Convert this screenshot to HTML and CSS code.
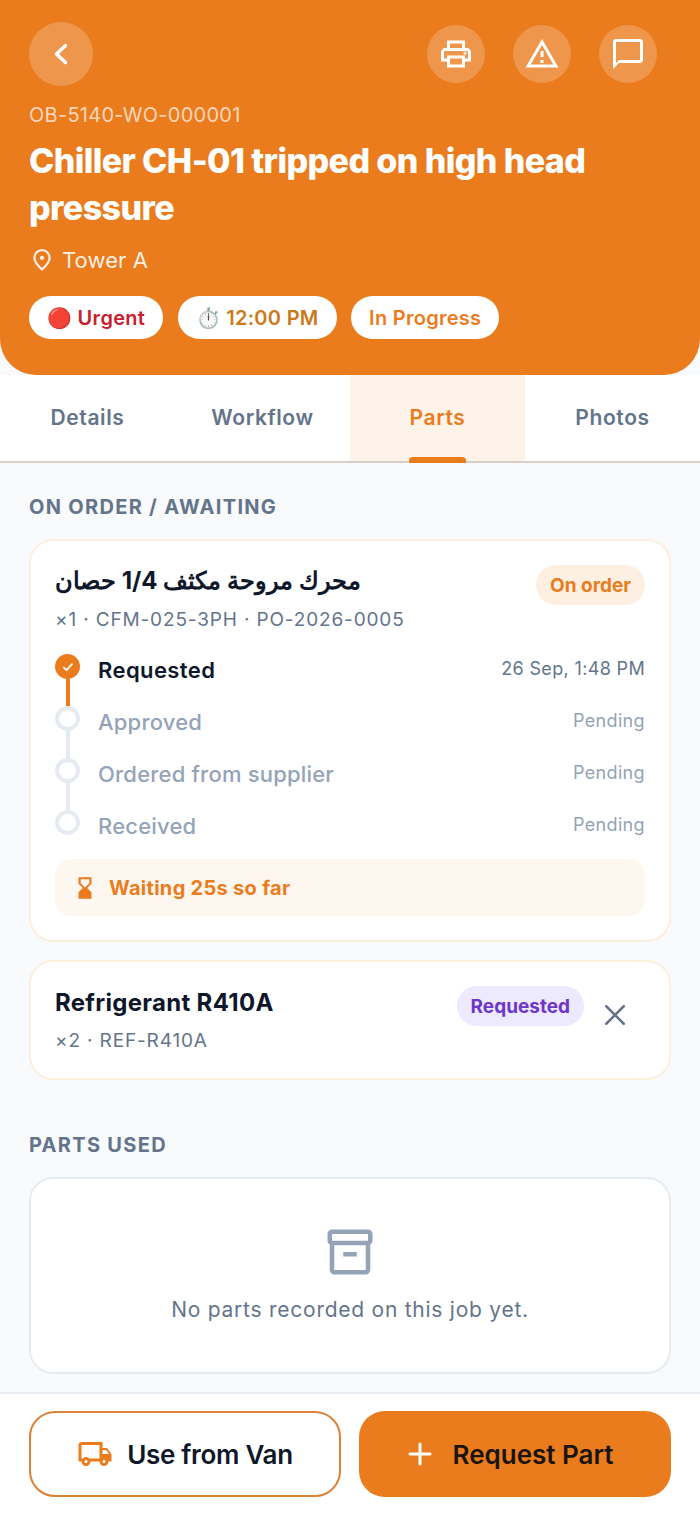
FILE: index.html
```html
<!DOCTYPE html>
<html lang="en">
<head>
    <meta charset="UTF-8">
    <meta name="viewport" content="width=device-width, initial-scale=1.0">
    <title>Work Order Parts</title>
    <link rel="stylesheet" href="styles.css">
</head>
<body>
    <div class="app">
        <header class="hero">
            <div class="hero-actions">
                <button class="round-btn back-btn">
                    <svg width="32" height="32" viewBox="0 0 32 32" fill="none" stroke="#fff" stroke-width="3.500" stroke-linecap="round" stroke-linejoin="round"><path d="M20.500 7.500 11.500 16l9 8.500"/></svg>
                </button>
                <div class="hero-tools">
                    <button class="round-btn">
                        <svg width="36" height="36" viewBox="0 0 24 24" fill="#fff"><path d="M19 8h-1V3H6v5H5c-1.660 0-3 1.340-3 3v6h4v4h12v-4h4v-6c0-1.660-1.340-3-3-3zM8 5h8v3H8V5zm8 12v2H8v-4h8v2zm2-2v-2H6v2H4v-4c0-.55.45-1 1-1h14c.55 0 1 .45 1 1v4h-2z"/><circle cx="18" cy="11.500" r="1"/></svg>
                    </button>
                    <button class="round-btn">
                        <svg width="36" height="36" viewBox="0 0 24 24" fill="#fff"><path d="M12 5.990 19.530 19H4.470L12 5.990M12 2 1 21h22L12 2zm1 14h-2v2h2v-2zm0-6h-2v4h2v-4z"/></svg>
                    </button>
                    <button class="round-btn">
                        <svg width="36" height="36" viewBox="0 0 24 24" fill="#fff"><path d="M20 2H4c-1.100 0-2 .9-2 2v18l4-4h14c1.100 0 2-.9 2-2V4c0-1.100-.9-2-2-2zm0 14H6l-2 2V4h16v12z"/></svg>
                    </button>
                </div>
            </div>
            <div class="wo-id">OB-5140-WO-000001</div>
            <h1>Chiller CH-01 tripped on high head pressure</h1>
            <div class="location">
                <svg width="26" height="26" viewBox="0 0 24 24" fill="#fff" fill-opacity="0.9"><path d="M12 12c-1.100 0-2-.9-2-2s.9-2 2-2 2 .9 2 2-.9 2-2 2zm6-1.800C18 6.570 15.350 4 12 4s-6 2.570-6 6.200c0 2.340 1.950 5.440 6 9.140 4.050-3.700 6-6.800 6-9.140zM12 2c4.200 0 8 3.220 8 8.200 0 3.320-2.670 7.250-8 11.800-5.330-4.550-8-8.480-8-11.800C4 5.220 7.800 2 12 2z"/></svg>
                <span>Tower A</span>
            </div>
            <div class="chips">
                <span class="chip chip-red">🔴 Urgent</span>
                <span class="chip chip-amber">⏱️ 12:00 PM</span>
                <span class="chip chip-orange">In Progress</span>
            </div>
        </header>

        <nav class="tabs">
            <div class="tab">Details</div>
            <div class="tab">Workflow</div>
            <div class="tab active">Parts</div>
            <div class="tab">Photos</div>
        </nav>

        <main class="content">
            <h2 class="section-title">ON ORDER / AWAITING</h2>

            <section class="card">
                <div class="part-head">
                    <div>
                        <div class="part-name part-name-ar" dir="rtl">محرك مروحة مكثف 1/4 حصان</div>
                        <div class="part-meta">×1 · CFM-025-3PH · PO-2026-0005</div>
                    </div>
                    <span class="badge badge-order">On order</span>
                </div>

                <div class="steps">
                    <div class="step done">
                        <div class="rail">
                            <span class="dot"><svg width="14" height="14" viewBox="0 0 24 24" fill="none" stroke="#fff" stroke-width="3" stroke-linecap="round" stroke-linejoin="round"><path d="M5 13l4.500 4.500L19 7"/></svg></span>
                            <span class="line"></span>
                        </div>
                        <div class="step-label">Requested</div>
                        <div class="step-time">26 Sep, 1:48 PM</div>
                    </div>
                    <div class="step">
                        <div class="rail"><span class="dot"></span><span class="line"></span></div>
                        <div class="step-label">Approved</div>
                        <div class="step-time">Pending</div>
                    </div>
                    <div class="step">
                        <div class="rail"><span class="dot"></span><span class="line"></span></div>
                        <div class="step-label">Ordered from supplier</div>
                        <div class="step-time">Pending</div>
                    </div>
                    <div class="step">
                        <div class="rail"><span class="dot"></span></div>
                        <div class="step-label">Received</div>
                        <div class="step-time">Pending</div>
                    </div>
                </div>

                <div class="waiting">
                    <svg width="26" height="26" viewBox="0 0 24 24" fill="#ea7c1e"><path d="M18 22l-.01-6L14 12l3.990-4.010L18 2H6v6l4 4-4 3.990V22h12zM8 7.500V4h8v3.500l-4 4-4-4z"/></svg>
                    <span>Waiting 25s so far</span>
                </div>
            </section>

            <section class="card card-small">
                <div class="part-head">
                    <div>
                        <div class="part-name">Refrigerant R410A</div>
                        <div class="part-meta">×2 · REF-R410A</div>
                    </div>
                    <div class="part-side">
                        <span class="badge badge-requested">Requested</span>
                        <svg class="close-icon" width="30" height="30" viewBox="0 0 24 24" fill="none" stroke="#64748b" stroke-width="2" stroke-linecap="round"><path d="M5 5l14 14M19 5 5 19"/></svg>
                    </div>
                </div>
            </section>

            <h2 class="section-title used-title">PARTS USED</h2>

            <section class="card empty">
                <svg width="54" height="54" viewBox="0 0 24 24" fill="#94a3b8"><path d="M20 2H4c-1 0-2 .9-2 2v3.010c0 .72.43 1.340 1 1.690V20c0 1.100 1.100 2 2 2h14c.9 0 2-.9 2-2V8.700c.57-.35 1-.97 1-1.690V4c0-1.100-1-2-2-2zm-1 18H5V9h14v11zm1-13H4V4h16v3z"/><path d="M9 12h6v2H9z"/></svg>
                <p>No parts recorded on this job yet.</p>
            </section>
        </main>

        <footer class="bottom-bar">
            <button class="action action-outline">
                <svg width="36" height="36" viewBox="0 0 24 24" fill="#ea7c1e"><path d="M20 8h-3V4H3c-1.100 0-2 .9-2 2v11h2c0 1.660 1.340 3 3 3s3-1.340 3-3h6c0 1.660 1.340 3 3 3s3-1.340 3-3h2v-5l-3-4zm-.5 1.500 1.960 2.500H17V9.500h2.500zM6 18c-.55 0-1-.45-1-1s.45-1 1-1 1 .45 1 1-.45 1-1 1zm2.220-3c-.55-.61-1.330-1-2.220-1s-1.670.39-2.220 1H3V6h12v9H8.220zM18 18c-.55 0-1-.45-1-1s.45-1 1-1 1 .45 1 1-.45 1-1 1z"/></svg>
                <span>Use from Van</span>
            </button>
            <button class="action action-solid">
                <svg width="30" height="30" viewBox="0 0 24 24" fill="none" stroke="#fff" stroke-width="2.400" stroke-linecap="round"><path d="M12 4v16M4 12h16"/></svg>
                <span>Request Part</span>
            </button>
        </footer>
    </div>
</body>
</html>
```

FILE: styles.css
```css
* {
    box-sizing: border-box;
}
html, body {
    margin: 0;
    padding: 0;
}
body {
    font-family: Inter, "Noto Sans", sans-serif;
    background-color: #f8fafc;
    color: #0f172a;
}
button {
    font-family: inherit;
    border: none;
    cursor: pointer;
}
.app {
    height: 100vh;
    display: flex;
    flex-direction: column;
    overflow: hidden;
}

/* header */
.hero {
    height: 375px;
    flex: none;
    padding: 22px 29px 0;
    background-color: #ea7c1e;
    border-radius: 0 0 36px 36px;
    color: #fff;
}
.hero-actions {
    display: flex;
    justify-content: space-between;
    align-items: center;
    padding-right: 14px;
}
.hero-tools {
    display: flex;
    gap: 28px;
}
.round-btn {
    width: 58px;
    height: 58px;
    padding: 0;
    border-radius: 50%;
    background-color: rgba(255, 255, 255, 0.2);
    display: flex;
    align-items: center;
    justify-content: center;
}
.back-btn {
    width: 64px;
    height: 64px;
}
.wo-id {
    margin-top: 17px;
    font-size: 20px;
    line-height: 24px;
    letter-spacing: 0.27px;
    color: rgba(255, 255, 255, 0.7);
}
h1 {
    margin: 10px 0 0;
    font-size: 34px;
    line-height: 47px;
    font-weight: 800;
    letter-spacing: -0.6px;
}
.location {
    margin-top: 16px;
    display: flex;
    align-items: center;
    gap: 7px;
    font-size: 22px;
    letter-spacing: 0.1px;
    color: rgba(255, 255, 255, 0.9);
}
.chips {
    margin-top: 23px;
    display: flex;
    gap: 14.5px;
}
.chip {
    height: 43px;
    padding: 0 18px;
    border-radius: 22px;
    background-color: #fff;
    display: flex;
    align-items: center;
    font-size: 20px;
    font-weight: 600;
    letter-spacing: 0.28px;
}
.chip-red {
    color: #c8202f;
}
.chip-amber {
    color: #c97a1a;
}
.chip-orange {
    color: #ea7c1e;
}

/* tabs */
.tabs {
    flex: none;
    height: 88px;
    display: flex;
    background-color: #fff;
    border-bottom: 2px solid #d9cfc8;
}
.tab {
    flex: 1;
    display: flex;
    align-items: center;
    justify-content: center;
    padding-bottom: 2px;
    font-size: 21px;
    font-weight: 600;
    letter-spacing: 0.6px;
    color: #64748b;
}
.tab.active {
    position: relative;
    background-color: #fdf3e9;
    color: #ea7c1e;
}
.tab.active::after {
    content: "";
    position: absolute;
    left: 59px;
    bottom: -2px;
    width: 57px;
    height: 6px;
    border-radius: 4px 4px 0 0;
    background-color: #ea7c1e;
}

/* content */
.content {
    flex: 1;
    min-height: 0;
    overflow: hidden;
    padding: 31px 29px 0;
}
.section-title {
    margin: 0 0 19px;
    font-size: 20px;
    line-height: 26px;
    font-weight: 700;
    letter-spacing: 1.3px;
    color: #64748b;
}
.used-title {
    margin-top: 52px;
    margin-bottom: 19px;
}
.card {
    background-color: #fff;
    border: 2px solid #fdefe0;
    border-radius: 24px;
    padding: 24px 24px 24px;
    margin-bottom: 18px;
}
.card-small {
    height: 120px;
}
.part-head {
    display: flex;
    justify-content: space-between;
    align-items: flex-start;
}
.part-name {
    font-size: 24px;
    line-height: 32px;
    font-weight: 700;
    letter-spacing: 0.3px;
    color: #0f172a;
}
.part-name-ar {
    text-align: left;
}
.part-meta {
    margin-top: 11px;
    font-size: 19px;
    line-height: 24px;
    letter-spacing: 0.85px;
    color: #64748b;
}
.card-small .part-name {
    margin-top: 1px;
}
.card-small .part-meta {
    margin-top: 10px;
}
.part-side {
    display: flex;
    align-items: flex-start;
    gap: 16px;
    padding-right: 15px;
}
.close-icon {
    margin-top: 14px;
}
.badge {
    height: 40px;
    padding: 0 14px;
    border-radius: 20px;
    display: flex;
    align-items: center;
    font-size: 19px;
    font-weight: 700;
}
.badge-order {
    background-color: #fdf0e2;
    color: #ea7c1e;
}
.badge-requested {
    background-color: #ede9fe;
    color: #6d36c9;
}

/* timeline */
.steps {
    margin-top: 22px;
}
.step {
    display: flex;
    height: 52px;
}
.step:last-child {
    height: 49px;
}
.rail {
    width: 25px;
    margin-right: 18px;
    display: flex;
    flex-direction: column;
    align-items: center;
}
.dot {
    width: 25px;
    height: 25px;
    flex: none;
    border-radius: 50%;
    border: 4px solid #e6ebf1;
    background-color: #fff;
    display: flex;
    align-items: center;
    justify-content: center;
}
.line {
    width: 4px;
    flex: 1;
    background-color: #e6ebf1;
}
.step.done .dot {
    border: none;
    background-color: #ea7c1e;
}
.step.done .line {
    background-color: #ea7c1e;
}
.step-label {
    flex: 1;
    font-size: 22px;
    line-height: 32px;
    font-weight: 500;
    letter-spacing: 0.2px;
    color: #94a3b8;
}
.step.done .step-label {
    font-weight: 600;
    letter-spacing: 0.4px;
    color: #0f172a;
}
.step-time {
    font-size: 18px;
    line-height: 30px;
    letter-spacing: 0.35px;
    color: #94a3b8;
}
.step.done .step-time {
    color: #64748b;
}
.waiting {
    height: 57px;
    padding: 0 17px;
    display: flex;
    align-items: center;
    gap: 11px;
    border-radius: 16px;
    background-color: #fef7f0;
    font-size: 20px;
    font-weight: 700;
    letter-spacing: 0.3px;
    color: #ea7c1e;
}

/* empty state */
.empty {
    height: 197px;
    margin: 0;
    padding: 46px 0 0;
    border-color: #e7ecf2;
    display: flex;
    flex-direction: column;
    align-items: center;
}
.empty p {
    margin: 18px 0 0;
    font-size: 21px;
    letter-spacing: 0.75px;
    color: #64748b;
}

/* bottom bar */
.bottom-bar {
    flex: none;
    height: 123px;
    padding: 17px 29px 0;
    display: grid;
    grid-template-columns: 1fr 1fr;
    gap: 18px;
    background-color: #fff;
    border-top: 2px solid #e8edf3;
}
.action {
    height: 86px;
    padding: 0;
    border-radius: 26px;
    display: flex;
    align-items: center;
    justify-content: center;
    gap: 14px;
    font-size: 26px;
    font-weight: 600;
    color: #0f172a;
}
.action-outline {
    background-color: #fff;
    border: 2px solid #d9823a;
    letter-spacing: -0.3px;
}
.action-solid {
    background-color: #ea7c1e;
    gap: 18px;
    padding-right: 12px;
    color: #1a1410;
}
```
